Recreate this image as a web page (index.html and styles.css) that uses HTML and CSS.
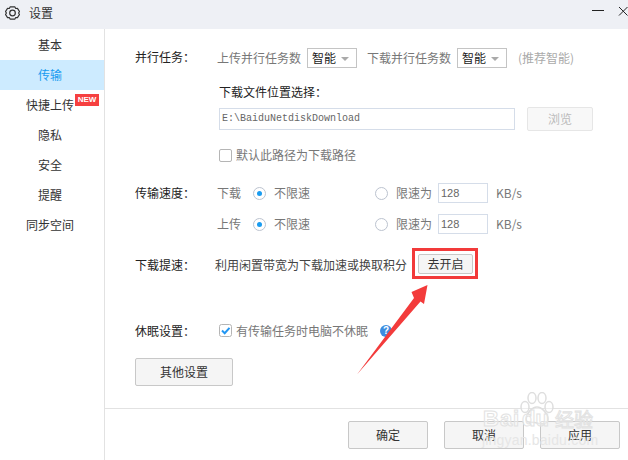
FILE: index.html
```html
<!DOCTYPE html>
<html lang="zh">
<head>
<meta charset="utf-8">
<title>设置</title>
<link rel="stylesheet" href="styles.css">
</head>
<body>
<div class="window">
  <header class="titlebar">
    <svg class="gear" width="15" height="16" viewBox="0 0 16 16"><path d="M5.400 1.500h5.200l.8 1.700 1.900-.1 2.200 3.400-1.100 1.500 1.100 1.500-2.200 3.400-1.900-.1-.8 1.700H5.400l-.8-1.700-1.900.1L.5 9.500 1.600 8 .5 6.500l2.200-3.400 1.900.1z" fill="none" stroke="#333" stroke-width="1.200" stroke-linejoin="round"/><circle cx="8" cy="8" r="3" fill="none" stroke="#333" stroke-width="1.300"/></svg>
    <span class="title">设置</span>
    <span class="winctl">
      <svg width="14" height="12" viewBox="0 0 14 12"><path d="M1 3.500h12" stroke="#222" stroke-width="1"/></svg>
      <svg width="10" height="12" viewBox="0 0 10 12"><path d="M1 0l8.500 8.500M9.500 0L1 8.500" stroke="#222" stroke-width="1"/></svg>
    </span>
  </header>
  <div class="body">
    <nav class="side">
      <div class="nav">基本</div>
      <div class="nav on">传输</div>
      <div class="nav">快捷上传<span class="new">NEW</span></div>
      <div class="nav">隐私</div>
      <div class="nav">安全</div>
      <div class="nav">提醒</div>
      <div class="nav">同步空间</div>
    </nav>
    <div class="right">
      <main class="main">
        <section class="row r1">
          <div class="lab">并行任务：</div>
          <div class="col">
            <div class="line parallel">
              <span class="gray">上传并行任务数</span>
              <span class="sel">智能<i class="caret"></i></span>
              <span class="gray gapl">下载并行任务数</span>
              <span class="sel">智能<i class="caret"></i></span>
              <span class="hint">(推荐智能)</span>
            </div>
            <div class="dl">下载文件位置选择：</div>
            <div class="line path">
              <span class="input">E:\BaiduNetdiskDownload</span>
              <span class="browse">浏览</span>
            </div>
            <label class="line check"><i class="box"></i><span class="gray">默认此路径为下载路径</span></label>
          </div>
        </section>
        <section class="row r2">
          <div class="lab">传输速度：</div>
          <div class="col">
            <div class="line speed">
              <span class="gray dir">下载</span>
              <i class="radio sel-r"></i><span class="gray unl">不限速</span>
              <i class="radio"></i><span class="gray lim">限速为</span>
              <span class="num">128</span><span class="gray unit">KB/s</span>
            </div>
            <div class="line speed">
              <span class="gray dir">上传</span>
              <i class="radio sel-r"></i><span class="gray unl">不限速</span>
              <i class="radio"></i><span class="gray lim">限速为</span>
              <span class="num">128</span><span class="gray unit">KB/s</span>
            </div>
          </div>
        </section>
        <section class="row r3">
          <div class="lab">下载提速：</div>
          <span class="boost">利用闲置带宽为下载加速或换取积分</span>
          <span class="go-ring"><span class="btn go">去开启</span></span>
        </section>
        <section class="row r4">
          <div class="lab">休眠设置：</div>
          <svg class="tick" width="14" height="14" viewBox="0 0 14 14"><rect x=".5" y=".5" width="12" height="12" rx="2" fill="#fff" stroke="#b5b5b5"/><path d="M3 6.500l2.700 2.700L10.500 3.800" fill="none" stroke="#2196f3" stroke-width="2"/></svg>
          <span class="gray sleep">有传输任务时电脑不休眠</span>
          <span class="help">?</span>
        </section>
        <div class="btn other">其他设置</div>
      </main>
      <footer class="foot">
        <span class="btn act">确定</span>
        <span class="btn act">取消</span>
        <span class="btn act">应用</span>
      </footer>
    </div>
  </div>
  <svg class="arrow" width="90" height="105" viewBox="350 275 90 105"><path d="M427.500 285L411.500 292 414 298 357 374.500 420.500 301.500 424 304z" fill="#f33b3b"/></svg>
  <div class="mark">
    <svg class="paw" width="36" height="36" viewBox="0 0 36 36"><g fill="#fff" fill-opacity=".4" stroke="#dedede" stroke-width="1.500"><ellipse cx="6" cy="15" rx="4" ry="5.500"/><ellipse cx="13" cy="6" rx="4" ry="5.500"/><ellipse cx="23" cy="6" rx="4" ry="5.500"/><ellipse cx="30" cy="15" rx="4" ry="5.500"/><path d="M18 15c5 0 11 7 11 12s-6 6-11 4-11 1-11-4 6-12 11-12z"/></g></svg>
    <span class="mbig">Bai</span>
    <span class="mdu">du</span>
    <span class="mjy">经验</span>
    <span class="msmall">jingyan.baidu.com</span>
  </div>
</div>
</body>
</html>
```
FILE: styles.css
```css
* { box-sizing: border-box; }
html, body { margin: 0; padding: 0; }
body { width: 628px; height: 460px; overflow: hidden; background: #fff; color: #333; font: 12px/16px "Noto Sans CJK SC", "Liberation Sans", sans-serif; }
i { font-style: normal; display: block; flex: none; }
.window { position: relative; width: 628px; height: 460px; display: flex; flex-direction: column; overflow: hidden; }
.titlebar { height: 29px; flex: none; background: #eef0f5; display: flex; align-items: center; padding: 0 0 3px 5px; }
.gear { margin-right: 9px; }
.title { color: #333; }
.winctl { margin-left: auto; display: flex; gap: 13px; align-items: flex-start; height: 12px; }
.body { flex: 1; display: flex; min-height: 0; }
.side { width: 105px; flex: none; border-right: 1px solid #e2e2e2; padding-top: 1px; }
.nav { position: relative; height: 30px; line-height: 30px; text-align: center; color: #333; padding-right: 4px; }
.nav.on { background: #cdebff; color: #1a9cf0; }
.new { position: absolute; left: 75px; top: 4px; width: 24px; height: 12px; background: #f64040; color: #fff; font: bold 8px/12px "Liberation Sans", sans-serif; text-align: center; }
.right { flex: 1; display: flex; flex-direction: column; min-width: 0; }
.main { flex: 1; padding: 0 0 0 30px; }
.row { display: flex; }
.lab { width: 80px; flex: none; color: #222; line-height: 16px; }
.col { flex: 1; min-width: 0; }
.line { display: flex; align-items: center; }
.gray { color: #777; white-space: nowrap; }
.r1 { padding-top: 19px; }
.r1 .lab { padding-top: 1px; }
.parallel { height: 20px; margin-left: 2px; }
.sel { width: 50px; height: 20px; border: 1px solid #c4c4c4; margin-left: 6px; display: flex; align-items: center; padding-left: 4px; color: #222; position: relative; }
.caret { position: absolute; right: 7px; top: 8px; border: 4px solid transparent; border-top-color: #aaa; border-bottom: 0; }
.gapl { margin-left: 10px; }
.hint { color: #aaa; margin-left: 11px; }
.dl { margin: 16px 0 0 4px; color: #222; height: 16px; }
.path { margin: 7px 0 0 4px; height: 24px; }
.input { width: 296px; height: 22px; border: 1px solid #d5dde9; padding-left: 2px; font: 10px/20px "Liberation Mono", monospace; color: #666; }
.browse { width: 66px; height: 24px; margin-left: 12px; border: 1px solid #e6e6e6; border-radius: 2px; background: #f8f8f8; color: #bbb; line-height: 22px; text-align: center; }
.check { margin: 16px 0 0 4px; height: 16px; }
.box { width: 13px; height: 13px; border: 1px solid #b5b5b5; border-radius: 2px; margin-right: 4px; }
.r2 { margin-top: 20px; }
.r2 .lab { padding-top: 2px; }
.speed { height: 20px; margin-bottom: 11px; }
.dir { width: 36px; margin-left: 2px; }
.radio { width: 13px; height: 13px; border: 1px solid #bcc3cf; border-radius: 50%; position: relative; background: #fff; }
.sel-r::after { content: ""; position: absolute; left: 3px; top: 3px; width: 5px; height: 5px; background: #1a9cf0; border-radius: 50%; }
.unl { width: 101px; margin-left: 8px; }
.lim { margin-left: 8px; width: 42px; }
.num { width: 50px; height: 20px; border: 1px solid #d5dde9; padding-left: 2px; font: 11px/18px "Liberation Sans", sans-serif; color: #666; }
.unit { margin-left: 8px; }
.r3 { margin-top: 3px; align-items: center; height: 31px; }
.r3 .lab { padding-top: 3px; }
.boost { width: 197px; padding-top: 3px; color: #444; white-space: nowrap; }
.go-ring { display: block; border: 3px solid #f23a3a; padding: 3px 0 0 3px; width: 66px; height: 31px; }
.btn { display: block; border: 1px solid #c8c8c8; border-radius: 2px; background: #f5f5f5; color: #333; text-align: center; }
.go { width: 55px; height: 20px; line-height: 18px; }
.r4 { margin-top: 44px; align-items: center; height: 16px; }
.tick { margin: 0 3px 0 4px; }
.sleep { width: 144px; }
.help { width: 12px; height: 12px; border-radius: 50%; background: #3c8ce0; color: #fff; font: bold 10px/12px "Liberation Sans", sans-serif; text-align: center; }
.other { width: 98px; height: 28px; line-height: 26px; margin-top: 19px; }
.foot { height: 52px; flex: none; border-top: 1px solid #e2e2e2; display: flex; gap: 16px; padding: 12px 0 0 243px; }
.act { width: 80px; height: 28px; line-height: 26px; flex: none; }
.arrow { position: absolute; left: 350px; top: 275px; }
.mark { position: absolute; left: 480px; top: 390px; width: 148px; height: 60px; pointer-events: none; }
.paw { position: absolute; left: 39px; top: 2px; }
.mbig, .mdu, .mjy, .msmall { position: absolute; white-space: nowrap; color: rgba(255,255,255,.35); -webkit-text-stroke: 1px #e2e2e2; font-family: "Liberation Sans", sans-serif; }
.mbig { left: 3px; top: 18px; font-size: 22px; line-height: 22px; font-weight: bold; letter-spacing: 1px; }
.mdu { left: 42px; top: 18px; font-size: 22px; line-height: 22px; font-weight: bold; }
.mjy { left: 75px; top: 18px; font-size: 19px; line-height: 22px; font-family: "Noto Sans CJK SC", sans-serif; }
.msmall { left: 2px; top: 43px; font-size: 14px; line-height: 14px; -webkit-text-stroke: 0; color: #e6e6e6; letter-spacing: .2px; }
```
